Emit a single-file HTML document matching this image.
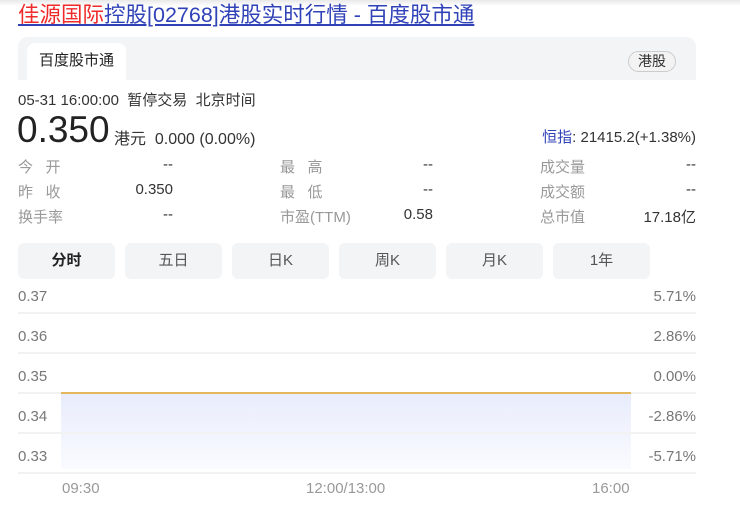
<!DOCTYPE html>
<html><head><meta charset="utf-8"><style>
*{margin:0;padding:0;box-sizing:border-box}
body{width:740px;height:506px;background:#fff;font-family:"Liberation Sans","Noto Sans CJK SC",sans-serif;position:relative;overflow:hidden;color:#222}
.a{position:absolute;white-space:nowrap}
.topbar{position:absolute;left:0;top:0;width:740px;height:6px;background:linear-gradient(#e8e8e8,#fff)}
.title{left:18px;top:2px;font-size:21.5px;color:#3042b8;text-decoration:underline;line-height:26px}
.title span{color:#f02a2a}
.hdr{left:18px;top:37px;width:678px;height:43px;background:#f3f4f6;border-radius:10px 10px 0 0}
.tab{left:27px;top:43px;width:99px;height:37px;background:#fff;border-radius:8px 8px 0 0;font-size:15px;line-height:36px;text-align:center;color:#222}
.pill{left:628px;top:51px;width:48px;height:21px;border:1px solid #ccc;border-radius:11px;background:#f3f3f3;font-size:14px;line-height:19px;text-align:center;color:#333}
.s{font-size:15px}
.lbl{font-size:15px;color:#999}
.val{font-size:15px;color:#333;text-align:right;width:80px}
.btn{top:243px;width:97px;height:36px;background:#f3f4f6;border-radius:6px;font-size:15px;line-height:36px;text-align:center;color:#555}
.yl{font-size:15px;color:#777;left:18px}
.yr{font-size:15px;color:#777;right:44px}
.g{left:18px;width:678px;height:2px;background:#f2f2f2}
</style></head><body>
<div class="topbar"></div>
<div class="a title"><span>佳源国际</span>控股[02768]港股实时行情 - 百度股市通</div>
<div class="a hdr"></div>
<div class="a tab">百度股市通</div>
<div class="a pill">港股</div>
<div class="a s" style="left:18px;top:89px;color:#333">05-31 16:00:00&nbsp; 暂停交易&nbsp; 北京时间</div>
<div class="a" style="left:17px;top:109px;font-size:37px;line-height:42px;color:#222">0.350</div>
<div class="a" style="left:114px;top:125px;font-size:16px;color:#333">港元&nbsp; 0.000 (0.00%)</div>
<div class="a" style="right:44px;top:126px;font-size:15px;color:#333"><span style="color:#3042b8">恒指</span>: 21415.2(+1.38%)</div>

<div class="a lbl" style="left:18px;top:156px">今&nbsp;&nbsp;&nbsp;开</div><div class="a val" style="left:93px;top:156px">--</div>
<div class="a lbl" style="left:18px;top:181px">昨&nbsp;&nbsp;&nbsp;收</div><div class="a val" style="left:93px;top:181px">0.350</div>
<div class="a lbl" style="left:18px;top:206px">换手率</div><div class="a val" style="left:93px;top:206px">--</div>
<div class="a lbl" style="left:280px;top:156px">最&nbsp;&nbsp;&nbsp;高</div><div class="a val" style="left:353px;top:156px">--</div>
<div class="a lbl" style="left:280px;top:181px">最&nbsp;&nbsp;&nbsp;低</div><div class="a val" style="left:353px;top:181px">--</div>
<div class="a lbl" style="left:280px;top:206px">市盈(TTM)</div><div class="a val" style="left:353px;top:206px">0.58</div>
<div class="a lbl" style="left:540px;top:156px">成交量</div><div class="a val" style="left:616px;top:156px">--</div>
<div class="a lbl" style="left:540px;top:181px">成交额</div><div class="a val" style="left:616px;top:181px">--</div>
<div class="a lbl" style="left:540px;top:206px">总市值</div><div class="a val" style="left:616px;top:206px">17.18亿</div>

<div class="a btn" style="left:18px;font-weight:bold;color:#222">分时</div>
<div class="a btn" style="left:125px">五日</div>
<div class="a btn" style="left:232px">日K</div>
<div class="a btn" style="left:339px">周K</div>
<div class="a btn" style="left:446px">月K</div>
<div class="a btn" style="left:553px">1年</div>

<div class="a" style="left:61px;top:393px;width:570px;height:76px;background:linear-gradient(#e8ecfb,#fafbff)"></div>
<div class="a g" style="top:312px"></div>
<div class="a g" style="top:352px"></div>
<div class="a g" style="top:392px"></div>
<div class="a g" style="top:432px"></div>
<div class="a g" style="top:472px"></div>
<div class="a" style="left:61px;top:392px;width:570px;height:2px;background:#e2b85a"></div>
<div class="a yl" style="top:288px">0.37</div><div class="a yr" style="top:288px">5.71%</div>
<div class="a yl" style="top:328px">0.36</div><div class="a yr" style="top:328px">2.86%</div>
<div class="a yl" style="top:368px">0.35</div><div class="a yr" style="top:368px">0.00%</div>
<div class="a yl" style="top:408px">0.34</div><div class="a yr" style="top:408px">-2.86%</div>
<div class="a yl" style="top:448px">0.33</div><div class="a yr" style="top:448px">-5.71%</div>
<div class="a" style="left:62px;top:480px;font-size:15px;color:#999">09:30</div>
<div class="a" style="left:306px;top:480px;font-size:15px;color:#999">12:00/13:00</div>
<div class="a" style="left:592px;top:480px;font-size:15px;color:#999">16:00</div>
</body></html>
